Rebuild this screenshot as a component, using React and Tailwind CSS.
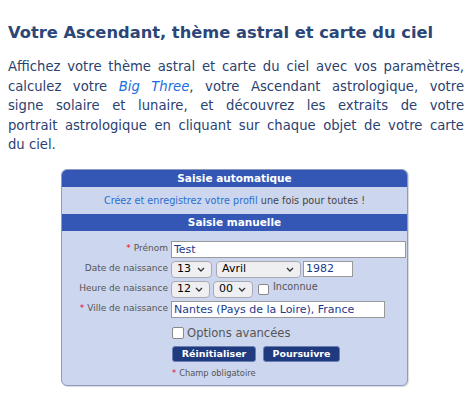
import React, { useState } from 'react'

const Chevron = () => (
    <svg width="8" height="5" viewBox="0 0 8 5" className="shrink-0">
        <path d="M1 1l3 3l3-3" fill="none" stroke="#333" strokeWidth="1.3" />
    </svg>
)

const Select = ({ value, width }) => (
    <div className={`flex items-center justify-between h-[17px] ${width} pl-[5px] pr-[6px] bg-[#efeff2] border border-[#a9a9b2] rounded-[4px] text-[11px] text-black`}>
        <span>{value}</span>
        <Chevron />
    </div>
)

const Label = ({ children, required }) => (
    <div className="text-right text-[9px] text-[#555] pr-[3px] whitespace-nowrap">
        {required && <span className="text-[#e0101a] mr-[3px]">*</span>}
        {children}
    </div>
)

const Line = ({ children, last }) => (
    <div className={last ? '' : 'text-justify [text-align-last:justify] whitespace-nowrap'}>{children}</div>
)

const App = () => {
    const [prenom, setPrenom] = useState('Test')
    const [ville, setVille] = useState('Nantes (Pays de la Loire), France')

    return (
        <div className="w-[472px] h-[399px] bg-white px-[8px] pt-[21px] font-['DejaVu_Sans',Verdana,sans-serif]">
            <h1 className="text-[16.3px] font-bold text-[#2b4677] leading-[24px] whitespace-nowrap">
                Votre Ascendant, thème astral et carte du ciel
            </h1>
            <div className="mt-[12px] text-[13.2px] leading-[19.5px] text-[#2b4170]">
                <Line>Affichez votre thème astral et carte du ciel avec vos paramètres,</Line>
                <Line>calculez votre <i className="text-[#1a6de0]">Big Three</i>, votre Ascendant astrologique, votre</Line>
                <Line>signe solaire et lunaire, et découvrez les extraits de votre</Line>
                <Line>portrait astrologique en cliquant sur chaque objet de votre carte</Line>
                <Line last>du ciel.</Line>
            </div>

            <div className="ml-[53px] mt-[14px] w-[347px] rounded-[6px] border border-[#8e9ac0] bg-[#ccd6ee] overflow-hidden shadow-[1px_1px_1px_rgba(0,0,0,0.15)]">
                <div className="h-[17px] bg-[#3457b6] text-white text-[10.5px] font-bold text-center leading-[17px]">
                    Saisie automatique
                </div>
                <div className="h-[27px] text-[9.7px] text-center leading-[27px] text-[#444]">
                    <span className="text-[#2a6fd0]">Créez et enregistrez votre profil</span> une fois pour toutes !
                </div>
                <div className="h-[17px] bg-[#3457b6] text-white text-[10.5px] font-bold text-center leading-[17px]">
                    Saisie manuelle
                </div>

                <div className="grid grid-cols-[109px_1fr] items-center gap-y-[3px] pt-[10px] pr-[2px]">
                    <Label required>Prénom</Label>
                    <input
                        value={prenom}
                        onChange={(e) => setPrenom(e.target.value)}
                        className="h-[17px] w-[235px] bg-white border border-[#999] px-[2px] text-[11px] text-[#1c3a8a] outline-none"
                    />

                    <Label>Date de naissance</Label>
                    <div className="flex items-center gap-[4px]">
                        <Select value="13" width="w-[41px]" />
                        <Select value="Avril" width="w-[85px]" />
                        <input
                            defaultValue="1982"
                            className="h-[16px] w-[50px] -ml-[2px] bg-white border border-[#999] px-[2px] text-[11px] text-[#1c3a8a] outline-none"
                        />
                    </div>

                    <Label>Heure de naissance</Label>
                    <div className="flex items-center gap-[3px]">
                        <Select value="12" width="w-[39px]" />
                        <Select value="00" width="w-[40px]" />
                        <span className="ml-[2px] w-[11px] h-[11px] bg-white border border-[#888] rounded-[2px]" />
                        <span className="ml-[1px] text-[9.7px] text-[#555] -mt-[3px]">Inconnue</span>
                    </div>

                    <Label required>Ville de naissance</Label>
                    <input
                        value={ville}
                        onChange={(e) => setVille(e.target.value)}
                        className="h-[17px] w-[214px] bg-white border border-[#999] px-[2px] text-[11px] text-[#1c3a8a] outline-none"
                    />

                    <div />
                    <div className="flex items-center mt-[4px] ml-[1px]">
                        <span className="w-[12px] h-[12px] bg-white border border-[#888] rounded-[2px]" />
                        <span className="ml-[3px] text-[11.6px] text-[#555]">Options avancées</span>
                    </div>

                    <div />
                    <div className="flex items-center gap-[7px] mt-[1px] ml-[1px]">
                        <button className="h-[16px] w-[84px] bg-[#1f3a7e] text-white text-[9.5px] font-bold rounded-[3px] leading-none border border-[#6a7fb0]">
                            Réinitialiser
                        </button>
                        <button className="h-[16px] w-[77px] bg-[#1f3a7e] text-white text-[9.5px] font-bold rounded-[3px] leading-none border border-[#6a7fb0]">
                            Poursuivre
                        </button>
                    </div>

                    <div />
                    <div className="mt-[2px] mb-[6px] ml-[1px] text-[8.3px] text-[#555]">
                        <span className="text-[#e0101a] mr-[3px]">*</span>Champ obligatoire
                    </div>
                </div>
            </div>
        </div>
    )
}

export default App
